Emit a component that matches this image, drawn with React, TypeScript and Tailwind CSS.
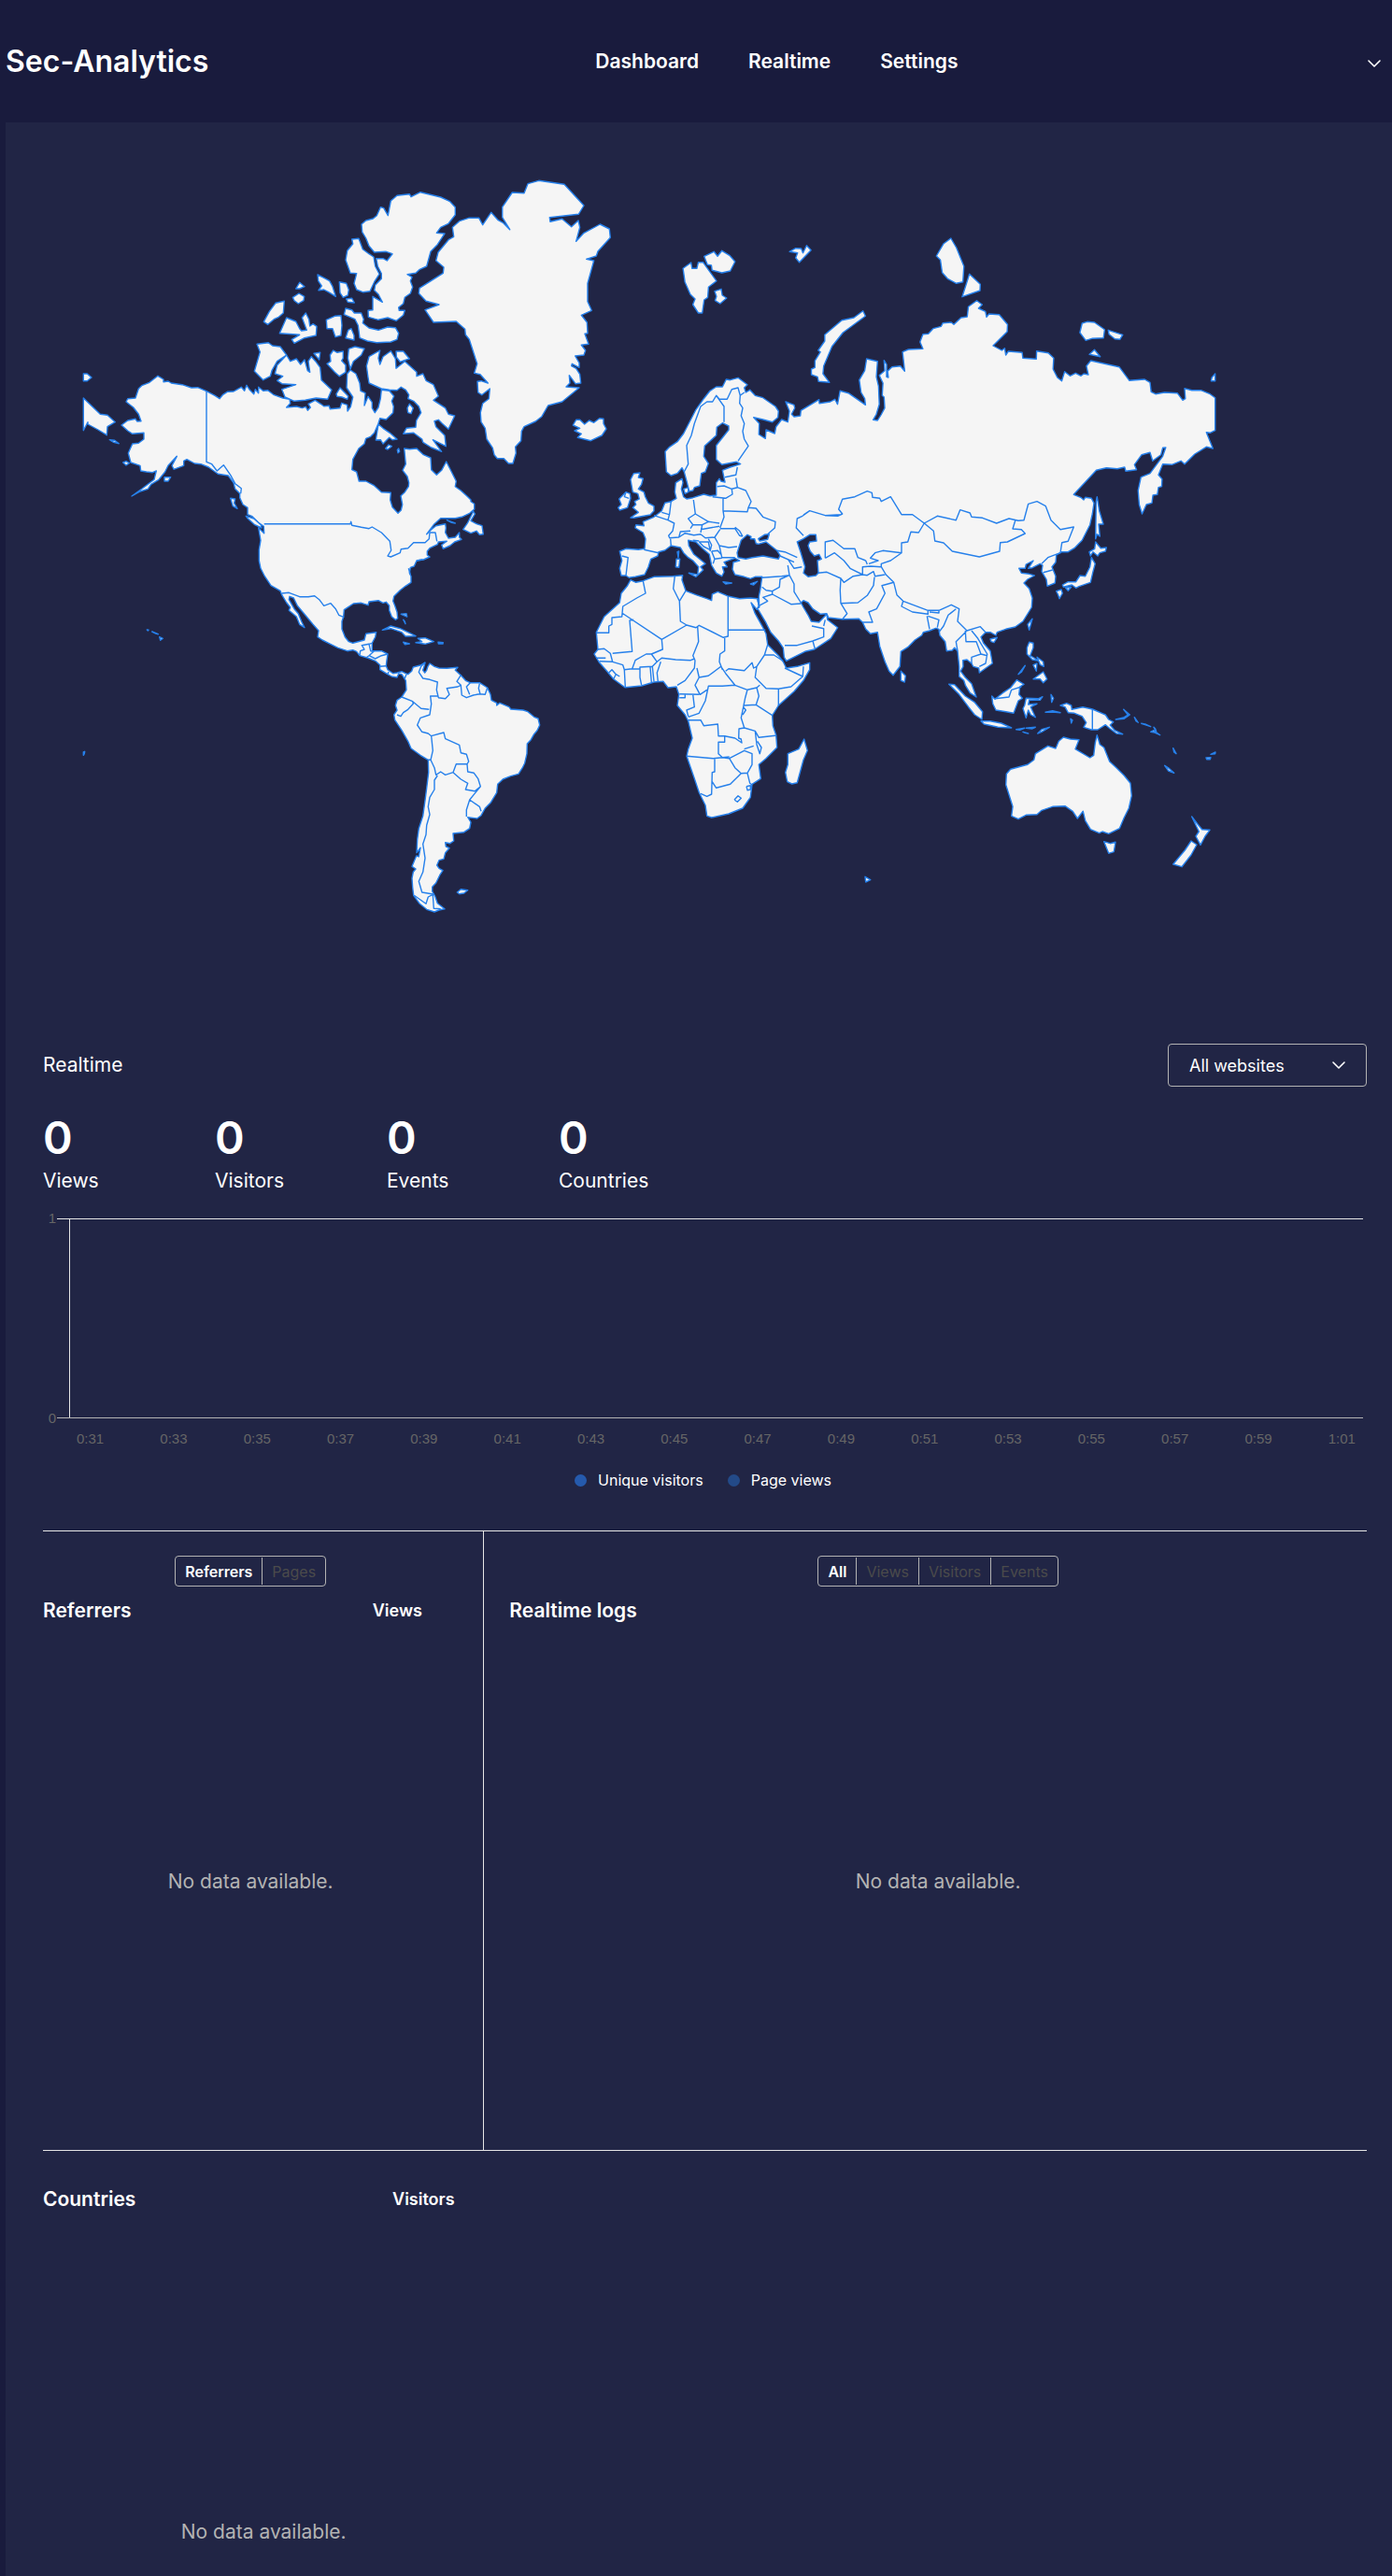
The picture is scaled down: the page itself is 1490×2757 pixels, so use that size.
import React from "react";
import { ChevronDown } from "lucide-react";

/* ---------- World map geometry ---------- */

type Sheet = "A" | "B" | "C" | "D" | "E" | "F" | "G";
type Part = [Sheet, string];

// Every survey sheet has its own origin and scale on the map.
const SHEETS: Record<Sheet, [number, number, number, number]> = {
  A: [80, 180, 1 / 3, 1 / 3],
  B: [400, 180, 1 / 3, 1 / 3],
  C: [80, 520, 1 / 3, 1 / 3],
  D: [620, 380, 1 / 3, 1 / 3],
  E: [620, 600, 1 / 3, 1 / 3],
  F: [700, 240, 610 / 1568, 1 / 3],
  G: [860, 500, 1 / 3, 1 / 3],
};

function project([sheet, list]: Part): string {
  const [ox, oy, sx, sy] = SHEETS[sheet];
  return list
    .trim()
    .split(/\s+/)
    .map((pair) => {
      const [x, y] = pair.split(",").map(Number);
      return `${(ox + x * sx).toFixed(1)} ${(oy + y * sy).toFixed(1)}`;
    })
    .join("L");
}

const shape = (...parts: Part[]) => `M${parts.map(project).join("L")}Z`;
const shapes = (sheet: Sheet, text: string) =>
  text.split(";").map((s) => shape([sheet, s])).join("");
const lines = (sheet: Sheet, text: string) =>
  text.split(";").map((s) => `M${project([sheet, s])}`).join("");

const AMERICAS = shape(
  ["A", "267,667 285,678 285,686 300,684 310,690 345,695 375,705 395,704 423,716 450,730 465,740 475,728 490,718 510,717 535,703 545,715 552,697 562,712 575,725 580,710 590,722 590,703 605,715 620,713 640,728 668,738 690,742 692,755 680,768 712,765 730,770 742,766 748,778 757,768 750,757 772,745 790,757 800,764 817,763 820,773 852,770 857,754 875,760 876,780 886,766 893,735 873,705 875,660 885,648 903,660 915,690 918,715 933,722 930,762 942,733 955,752 955,770 964,785 975,768 982,740 985,712 1010,715 1025,732 1018,748 1024,765 1022,785 1000,807 980,803 975,820 962,850 950,862 935,868 930,885 912,900 893,935 890,968 905,975 913,1005 935,1005 960,1018 985,1040 1015,1042"],
  ["C", "1013,45 1020,68 1038,88 1048,78 1052,60 1047,32 1060,20 1072,2"],
  ["A", "1073,1010 1068,990 1053,970 1063,950 1058,900 1075,902 1098,900 1120,920 1143,930 1145,968 1162,985 1178,970 1193,942 1210,975 1225,1005 1222,1022"],
  ["C", "1240,15 1262,35 1272,45 1272,50 1283,58 1283,75 1268,88 1243,100 1222,104 1175,104 1155,122 1130,155 1145,140 1160,128 1190,122 1192,135 1190,150 1200,168 1222,165 1235,150 1235,165 1242,172 1220,180 1205,192 1183,202 1178,190 1195,178 1168,180 1165,188 1140,200 1132,210 1132,222 1140,228 1120,237 1098,240 1090,258 1078,262 1075,280 1080,290 1080,310 1062,322 1045,335 1025,355 1022,370 1028,385 1035,405 1037,425 1030,430 1018,420 1010,400 1010,385 1000,373 990,376 975,368 945,372 942,383 920,376 895,378 880,388 865,398 863,420 858,435 858,460 868,485 880,500 893,505 930,495 935,475 968,470 965,485 955,505 955,530 985,530 1005,540 1002,560 1000,578 1005,590 1022,602 1035,600 1050,596 1062,602 1070,605 1082,595 1087,582 1110,576 1125,567 1122,580 1118,592 1124,600 1130,592 1134,580 1140,570 1155,580 1170,585 1195,586 1230,583 1222,592 1240,608 1255,625 1270,632 1300,632 1325,648 1335,670 1338,688 1355,697 1355,705 1365,697 1395,710 1400,717 1440,720 1455,725 1475,742 1488,747 1493,768 1485,785 1475,797 1465,815 1453,828 1452,860 1445,890 1438,905 1425,925 1400,932 1375,942 1358,958 1355,985 1335,1018 1318,1035 1305,1058 1292,1068 1262,1064 1272,1080 1268,1100 1250,1112 1215,1116 1217,1140 1205,1148 1190,1145 1192,1158 1203,1163 1190,1178 1185,1198 1170,1202 1163,1218 1170,1228 1182,1235 1172,1250 1160,1275 1148,1288 1148,1302 1157,1318 1165,1340 1188,1358 1170,1362 1155,1368 1130,1360 1108,1342 1088,1315 1085,1290 1083,1260 1087,1240 1095,1230 1083,1222 1090,1205 1097,1188 1105,1190 1110,1162 1098,1178 1100,1135 1105,1100 1118,1060 1125,1010 1130,970 1136,920 1135,880 1110,865 1080,843 1070,820 1050,785 1028,752 1025,735 1035,720 1030,705 1035,688 1050,678 1065,655 1063,625 1050,605 1040,603 1035,615 1018,612 1005,605 980,590 980,575 965,562 940,552 915,545 905,532 893,527 875,530 845,520 815,505 795,495 780,485 783,465 765,445 740,415 715,385 703,360 690,355 688,365 705,395 718,410 728,435 738,455 722,445 712,420 688,400 692,390 680,375 665,350 660,337 630,320 610,290 597,265 592,240 592,205 597,175 590,135 608,152 607,130 590,118 570,98 555,92 555,70 540,60 530,38"],
  ["A", "530,1045 515,1030 510,1010 493,987 460,982 430,960 405,950 385,948 360,935 350,940 350,955 318,967 312,955 328,925 300,955 290,975 270,1000 245,1015 235,1030 210,1038 183,1053 215,1030 235,1015 255,1000 262,972 250,977 230,975 212,972 210,955 180,945 172,915 185,885 205,883 222,870 222,850 185,853 170,843 150,825 170,810 195,805 200,813 213,812 205,790 188,768 165,750 170,740 195,738 205,708 215,698 240,688"]
);

const ARCTIC = shapes(
  "A",
  `1015,105 1035,88 1075,83 1080,92 1110,77 1175,93 1205,107 1222,125 1222,150 1200,178 1175,190 1162,208 1188,210 1165,245 1143,268 1130,315 1108,325 1095,337 1068,341 1083,350 1078,362 1085,382 1078,402 1060,415 1055,435 1040,447 1042,457 1060,457 1055,472 1033,490 1005,480 975,487 943,478 942,457 957,455 957,412 988,430 975,405 962,392 965,375 985,355 985,338 973,315 968,290 990,290 1003,297 1020,275 1000,268 962,270 945,250 935,225 923,205 921,180 935,168 958,162 970,152 982,125 992,128 1006,152;
890,228 912,226 925,260 945,275 960,285 965,315 978,340 962,365 948,395 925,398 905,390 897,370 905,338 885,337 870,295 875,265 893,243;
780,342 800,352 818,362 828,380 838,412 815,398 800,390 783,392 793,378 782,362;
850,365 872,370 880,390 877,408 862,415 852,400;
872,420 890,418 898,432 877,430;
710,387 722,367 738,380 722,387;
700,415 720,402 737,412 735,425 718,435 705,425;
607,493 625,460 645,433 673,427 670,465 655,478 640,485 620,502;
658,530 680,480 710,492 722,515 728,522 745,520 730,480 742,465 752,485 755,507 765,500 777,508 775,537 738,545 705,562 697,550 722,535;
808,487 835,475 855,473 858,505 855,537 837,542 828,515 810,515;
865,470 870,450 890,455 898,465 920,465 928,485 925,497 945,513 975,520 1005,510 1030,512 1040,530 1035,550 1015,558 970,560 940,555 915,545 910,505 900,485;
870,545 878,520 888,515 897,537 897,552;
585,565 622,560 635,570 660,573 680,600 650,620 633,650 628,668 605,680 577,652 595,590;
680,600 692,620 712,612 725,630 738,615 748,650 755,655 750,620 760,605 775,622 788,640 792,680 825,712 812,742 775,738 740,745 705,748 675,735 665,710 710,695 665,692 650,682 668,668 643,660 650,632;
768,595 788,592 785,615;
810,628 822,620 820,600 830,585 843,592 862,588 862,610 857,618 870,632 870,655 850,668 835,655;
885,645 877,610 880,580 900,573 930,580 920,600 895,620;
840,725 852,705 878,732 875,742 858,735 842,733;
985,708 945,690 942,672 937,635 945,605 980,585 975,610 980,630 990,605 1015,587 1030,612 1032,643 1060,620 1098,655 1098,668 1118,660 1128,682 1152,695 1168,732 1152,745 1190,770 1200,790 1220,795 1200,838 1180,820 1168,808 1155,812 1160,830 1188,858 1192,893 1150,872 1178,910 1145,897 1118,880 1115,870 1088,850 1055,853 1065,835 1095,832 1097,810 1112,785 1105,765 1088,748 1070,740 1073,728 1063,712 1048,703 1035,713 1010,712;
1032,588 1055,588 1075,612 1058,617 1045,622 1033,607;
1068,770 1075,757 1087,770 1080,788 1070,785;
975,822 990,835 1012,850 1035,870 1020,872 1010,865 990,885 982,872 967,873;
998,900 1008,888 1018,893 1005,903;
1036,905 1040,900 1043,910 1038,914;
288,992 308,992 300,1005 288,1005;
155,945 165,941 175,947 165,954;
28,738 82,790 105,793 130,815 105,830 103,857 75,840 42,822 42,815 28,842;
28,660 40,660 54,672 40,683 28,683;
112,872 128,874 142,884 125,880`
);

const NORTH_ATLANTIC = shapes(
  "B",
  `495,50 530,40 612,52 675,120 658,148 565,158 567,172 605,163 635,188 657,168 662,190 650,235 675,208 727,180 757,195 760,223 720,267 715,282 683,292 707,297 687,370 687,428 700,457 667,472 685,495 687,530 678,532 690,565 667,568 680,585 675,600 647,603 660,625 660,640 637,628 635,635 650,643 662,662 665,690 648,692 628,665 630,690 618,702 660,705 605,750 560,762 540,797 520,813 483,830 475,845 473,875 455,895 457,915 447,948 433,948 418,932 397,932 387,920 382,898 363,870 358,835 345,815 343,785 350,755 370,740 373,708 347,728 335,720 333,685 345,683 367,690 342,662 323,658 332,628 307,550 295,535 293,517 265,492 192,495 165,455 210,438 168,427 145,402 147,385 223,337 225,318 200,297 207,270 240,230 257,220 253,190 275,170 305,160 338,160 350,182 377,142 400,167 415,175 437,197 413,158 413,125 445,78 483,80;
640,825 650,808 662,808 677,822 692,810 707,817 725,803 738,805 738,820 747,837 733,858 697,875 655,865 667,853 645,843 662,835`
);

const AMERICAN_ISLANDS = shapes(
  "C",
  `1280,82 1285,90 1272,112 1290,122 1308,128 1312,155 1300,157 1290,145 1272,152 1247,140 1262,118;
550,97 575,105 598,125 600,135 578,125 556,105;
500,40 515,42 512,55 522,73 508,65;
988,463 1015,450 1045,458 1070,470 1095,482 1062,483 1050,470 1015,458;
1102,490 1125,488 1153,500 1125,508 1095,503 1115,500;
1055,502 1075,507 1060,509;
1167,502 1183,503 1182,507 1168,507;
1048,412 1065,410 1067,420;
1055,430 1062,443 1060,436;
1195,110 1222,120 1210,118;
232,462 237,463 235,465;
248,468 268,476 260,474;
272,485 283,490 275,496;
1228,1305 1240,1295 1262,1298 1250,1308 1235,1310;
28,855 32,853 31,860 28,865`
);

const EURASIA = shape(
  ["D", "295,387 280,375 276,310 290,295 315,278 335,252 375,175 400,140 420,115 440,102 460,102 472,78 485,80 510,73 540,95 530,105 535,120 548,112 565,130 590,137 630,165 640,180 638,200 620,215 590,207 560,200 578,220 577,255 598,268 600,240 628,252 632,230 650,207 670,215 675,180 663,150 690,160 692,170 682,190 690,198 710,195 712,178 770,143"],
  ["F", "455,575 485,570 498,562 505,578 512,535 535,542 582,580 580,560 570,540 565,500 580,470 585,432 615,440 612,490 618,520 620,578 612,610 603,628 615,630 625,612 635,590 633,555 628,550 630,510 620,485 635,470 633,437 640,450 640,490 645,492 643,472 655,458 678,455 690,472 684,410 700,402 740,400 732,378 740,353 755,352 768,335 790,328 795,317 818,315 825,322 845,300 862,297 865,265 888,245 903,258 893,270 912,280 915,298 922,288 950,290 973,322 972,345 933,390 957,405 965,398 968,420 975,408 1013,412 1015,430 1052,433 1053,407 1085,413 1100,430 1098,465 1110,492 1122,503 1130,473 1145,487 1160,478 1175,487 1183,480 1195,483 1190,455 1202,438 1280,458 1308,502 1350,498 1365,508 1368,538 1380,545 1405,540 1440,542 1455,565 1462,560 1460,527 1480,533 1505,533 1530,545 1544,557 1544,662 1530,670 1520,668 1538,720 1520,715 1488,738 1460,770 1450,760 1425,772 1400,770 1388,805 1398,818 1397,842 1388,845 1385,868 1373,870 1370,895 1355,900 1343,930 1335,900 1332,855 1340,812 1365,800 1400,745 1408,717 1400,718 1395,740 1372,760 1365,733 1342,740 1322,772 1328,788 1298,793 1295,780 1275,785 1245,782 1217,790"],
  ["G", "868,88 890,97 900,105 905,97 925,100 933,115 928,150 920,185 895,235 870,260 850,272 830,272 812,282 810,305 798,320 810,350 808,372 783,382 780,360 765,335 768,315 760,310 735,323 722,325 738,300 715,312 712,325 692,325 700,340 725,343 742,348 720,360 708,372 725,390 735,420 733,450 705,495 680,513 650,520 622,530 618,540 600,530 585,530 570,545 578,565 600,590 607,630 565,660 563,645 545,640 540,630 525,618 512,620 513,640 505,655 520,675 540,695 555,738 535,725 520,700 515,685 500,672 500,640 495,590 485,580 478,588 460,590 455,560 438,540 435,520 425,517 405,525 385,530 380,540 358,555 335,578 313,592 310,640 288,668 275,655 262,625 245,575 238,530 215,535 200,520 190,498 178,487 125,488 80,483 75,470 55,472 30,455 15,435 0,428"],
  ["E", "712,135 720,150 735,175 745,195 770,198 795,172 797,190 830,215 822,228 808,250 755,285 725,292 665,322 658,310 655,280 640,258 615,230 600,200 575,158 570,155 578,150 577,115 582,90"],
  ["D", "587,712 565,712 550,718 530,712 500,705 492,688 495,665 515,660 500,652 465,665 475,680 460,680 465,697 458,710 440,700 425,675 420,650 418,640 395,620 375,600 350,595 352,612 368,640 405,670 390,680 398,690 375,712 352,700 380,705 383,680 365,660 350,650 335,635 325,618 295,612 275,627 255,632 252,645 230,655 222,680 210,705 180,712 160,715 150,708 135,708 130,685 137,660 130,630 150,622 190,625 210,622 213,590 205,570 180,555 182,545 208,548 205,535 240,520 265,500 275,475 295,470 312,460 307,440 310,410 330,397 333,410 328,430 335,455 345,462 365,458 400,447 420,452 440,450 440,410 450,397 455,405 468,408 460,370 485,360 518,350 505,343 458,352 440,335 440,290 480,240 480,228 460,218 442,232 440,258 403,292 400,325 415,348 405,375 392,380 387,420 370,425 365,435 353,437 345,405 337,375 330,362 315,380"]
);

const AFRICA = shapes(
  "E",
  `165,62 182,70 205,65 240,52 300,50 332,47 330,62 342,97 375,110 410,122 425,128 427,108 445,100 480,115 515,122 550,120 572,122 577,145 570,157 552,135 565,170 590,215 600,235 605,270 640,305 655,325 665,345 700,340 740,328 740,350 720,385 690,420 640,465 620,497 622,530 632,560 635,600 600,635 577,655 583,700 555,718 550,760 525,795 480,813 425,825 410,820 405,785 385,745 370,700 345,628 350,605 363,570 350,515 340,495 315,465 320,430 312,405 285,408 270,388 240,390 200,402 147,407 110,380 85,350 65,328 48,300 60,285 55,230 80,180 130,135 135,105 155,80;
722,573 733,610 720,640 700,713 683,717 668,710 662,680 670,655 670,620 705,605`
);

const EUROPEAN_ISLANDS = shapes(
  "D",
  `175,380 195,378 190,393 205,397 200,415 190,430 208,440 212,455 222,475 240,485 240,500 228,513 175,523 165,522 190,505 172,490 182,480 178,470 193,462 188,445 172,440 165,400;
150,440 163,445 165,460 155,490 130,498 125,490 135,480 128,462;
335,430 350,425 350,440 340,445;
312,655 323,655 320,682 310,680;
315,632 320,630 318,650;
462,728 490,732 470,735;
550,735 572,727 560,738`
);

const NORTHERN_ISLANDS = shapes(
  "F",
  `80,142 102,123 105,142 118,142 122,122 135,122 172,182 150,202 148,235 138,243 133,285 122,285 107,258 113,240 100,225 85,185;
138,103 165,88 175,103 187,85 208,100 223,120 210,150 187,156 160,148 158,132 147,130;
167,215 185,208 188,228 200,237 182,255 168,245 172,232;
373,88 390,77 405,78 410,92 420,68 432,83 400,122 390,108 395,92;
575,278 582,295 520,348 490,392 467,455 465,480 483,508 453,505 450,490 433,483 433,465 443,460 443,438 458,410 452,405 470,375 470,355 517,308 550,300;
817,45 832,75 853,135 850,185 832,190 808,175 793,155 788,115 777,102 797,62;
868,160 898,193 897,213 848,233;
1178,318 1192,313 1212,315 1240,338 1237,365 1205,367 1188,373 1172,348;
1250,340 1290,355 1282,370 1268,368 1252,353;
1198,418 1212,403 1228,425;
1544,480 1544,503 1533,503 1535,492`
);

const PACIFIC = shapes(
  "G",
  `313,655 328,670 325,690 313,685;
600,552 622,547 612,563 603,560;
735,487 725,523 720,505;
943,95 950,140 963,183 948,183 952,222 943,215 938,230 940,110;
938,240 955,260 973,258 970,270 952,275 945,285 930,272 922,285 918,272 935,262;
925,290 937,310 930,335 922,370 885,383 875,388 862,378 835,385 832,378 850,368 875,368 888,348 905,350 920,320;
812,398 828,393 832,405 822,422 818,410;
842,388 860,385 850,397;
467,697 485,698 520,735 550,755 575,785 573,810 550,795 530,770 500,730;
570,815 600,815 635,822 668,837 625,835 580,825;
683,842 710,838 695,844;
705,850 722,855 712,853;
715,838 745,835 735,840;
752,855 765,842 790,835 765,850;
605,735 615,745 640,725 665,708 685,683 708,697 695,705 692,730 703,742 690,750 675,790 650,785 618,780 608,760;
710,765 715,742 755,743 768,737 760,748 725,748 722,762 750,760 730,770 745,803 730,795 722,780 715,805 705,775;
795,730 803,742 797,755;
777,787 800,782 825,788 800,786;
858,808 864,812 860,822;
725,562 738,565 738,580 728,605 740,612 755,622 735,618 718,600 718,580;
750,610 770,625 772,640 760,634;
738,635 750,630 748,655;
738,680 770,657 782,680 770,692 760,680;
712,637 690,665 700,658;
825,765 845,758 860,765 862,778 897,770 928,777 970,795 980,810 995,818 985,828 1000,845 1025,857 1005,855 985,840 970,827 945,843 925,843 900,835 908,820 895,800 870,790 850,788 840,770;
1003,810 1030,808 1048,795 1028,778 1042,795 1028,804;
1063,803 1075,820 1068,815;
1085,823 1115,833 1100,826;
1115,850 1125,845 1145,860 1128,852;
1125,835 1133,850 1130,840;
1187,902 1197,920 1190,915;
1160,958 1175,968 1190,982 1172,975;
1293,933 1308,932 1306,938 1295,938;
1308,922 1323,915 1322,920;
835,867 857,873 885,875 873,905 920,933 932,925 937,885 943,860 952,890 965,900 983,945 1005,965 1030,990 1050,1015 1054,1055 1045,1095 1030,1125 1015,1160 980,1177 960,1170 950,1175 922,1163 905,1135 898,1105 880,1128 865,1105 840,1088 800,1090 765,1102 750,1115 715,1117 690,1130 668,1120 672,1090 650,1020 652,985 665,970 720,955 740,940 745,920 785,895 810,903 820,880;
965,1202 985,1208 1002,1204 997,1235 980,1240;
1247,1122 1265,1145 1280,1163 1305,1165 1290,1185 1275,1213 1260,1185 1270,1170;
1245,1200 1263,1212 1245,1245 1215,1283 1187,1275 1225,1230;
198,1315 215,1325 200,1332`
);

const INLAND_SEAS = shapes(
  "D",
  `510,650 507,635 515,610 520,595 540,577 552,583 550,590 563,590 568,605 575,607 600,600 635,628 645,643 640,655 590,645 555,650 535,655;
575,590 595,577 610,575 605,592 580,597;
720,590 740,577 760,577 762,597 740,600 735,612 742,630 755,645 770,640 778,655 765,660 768,700 760,708 735,712 720,700 725,680 710,630 700,600`
);

const BORDERS =
  lines("A", "423,716 423,943 440,950 457,972 478,953 500,985 515,1013 535,1028 533,1045") +
  lines(
    "C",
    `608,122 885,122 887,115 890,127 920,133 945,137 955,132 985,150 1012,178 1016,207 1005,225 1015,228 1045,215 1048,203 1070,200 1088,182 1125,182 1138,170 1140,150 1158,150 1163,178;
665,345 688,343 722,356 750,356 770,353 785,365 800,385 822,377 838,395 848,415 865,422;
915,545 917,530 930,525 922,512 945,508 950,530 960,532 945,545 938,550;945,508 955,505;
945,545 965,555 985,545 1005,540;980,580 1000,578;1005,605 1008,597;1060,618 1065,605;
1125,567 1112,580 1105,598 1118,618 1140,622 1165,630 1162,655 1168,680 1190,683 1203,670 1195,650 1230,645 1240,640;
1240,608 1227,628 1240,640 1243,672 1258,680 1280,672 1300,668 1318,670 1325,648;
1270,632 1258,645 1268,670;1300,635 1297,650 1302,668;
1168,675 1142,675 1145,700 1140,735 1110,745 1100,768 1115,790 1135,795 1145,803 1150,850 1143,880 1135,880;
1035,735 1047,740 1055,728 1070,718 1087,700 1085,692 1050,678;1085,692 1112,715 1138,718;
1145,803 1185,792 1190,812 1235,832 1240,857 1258,862 1265,885 1260,893 1225,893 1215,920;
1143,880 1155,905 1160,928 1175,918 1190,928 1215,920;
1165,930 1155,945 1155,975 1140,1000 1135,1030 1140,1055 1130,1090 1128,1120 1118,1150 1125,1195 1118,1240 1105,1270 1115,1305 1155,1312;
1090,1315 1128,1342 1135,1320 1150,1312 1153,1357 1175,1358;
1215,920 1240,942 1262,955 1255,975 1285,980 1303,965 1295,940 1282,922 1262,918 1260,893;
1303,965 1268,1008 1258,1040 1258,1062;1268,1008 1300,1030 1305,1045;
1072,265 1078,285;1098,240 1118,236`
  ) +
  lines(
    "E",
    `205,65 213,105 185,120 140,147 137,180 105,183 105,205 95,210 95,232 55,232;
137,168 265,253 268,285 232,300;175,190 162,192 170,292 107,298;
265,253 345,207 325,195 322,130 302,90 307,50;322,130 342,97;
345,207 375,215 385,208 463,247 478,243 478,115;478,222 598,223;
380,212 383,260 365,305 372,320;232,300 250,325 265,313 310,318 358,320 370,315;
467,247 467,290 452,300 450,325 460,350;
145,350 170,347 180,320 215,300 232,300;250,325 235,340 195,342 195,375 200,400;170,347 195,348;
235,340 240,388;228,342 232,390;262,325 250,360 253,388;
372,320 370,345 340,385 315,400;378,345 385,375 372,400 388,430 410,415;
385,375 415,370 455,340 470,362 500,400 460,403 415,403 405,450 385,490 350,502;
322,428 385,430;340,430 340,440 322,440;365,430 370,470 345,480 350,500;
350,512 390,512 400,530 445,525 447,563 467,563 467,583 447,583 447,620 460,632 482,635;
467,563 500,570 522,585 520,573 512,570 513,540 530,537 520,505 527,470 533,440 540,415 500,400;
540,415 570,408 577,435 568,463 530,465;568,463 620,497;527,470 535,480 525,495;
530,537 565,547 577,568 630,562;565,547 570,590 580,620 585,600 572,580;530,605 560,595;
482,635 530,610 555,620 555,655 540,682 520,683 500,665 482,635;
345,628 430,635 482,630;435,637 435,678 427,680 425,750 410,757 390,748;
427,710 440,730 485,718 520,683;540,682 548,715 555,720;
498,768 510,755 520,763 508,775 498,768;537,725 550,722 550,735 540,737 537,725;
470,355 480,347 530,353 555,328 560,345 570,340;
605,270 595,303 570,340 565,375 600,410 640,412 680,405 718,372 660,345;
595,303 625,303 655,322;640,465 640,412;570,408 580,400;720,340 718,370;
60,285 80,283 100,298 107,325 65,323;55,313 85,313;107,325 140,335 145,350 148,405;
95,360 105,350 118,365 110,380;118,365 130,372;
577,145 605,130 590,118 620,108 620,98 643,85 645,60 675,47;620,108 680,140 712,138;
675,47 690,75 690,100 712,135;587,85 600,95 620,98;
660,272 700,272 750,258 785,245 785,218 747,210;750,258 757,283;790,190 785,210;
587,55 650,50 675,47 670,15;572,122 578,150`
  ) +
  lines(
    "D",
    `337,375 350,350 345,290 360,258 370,220 390,165 410,150 428,150 440,130 465,165 465,215;
440,130 450,142 475,142 490,110 510,105 517,130 530,120;
517,130 515,155 525,170 520,195 530,220 525,245 530,270 543,292 510,340;
508,360 503,385 468,392;503,395 508,425 535,435 552,470 543,490 568,492 590,520 630,535 628,555 605,575;
508,425 490,430 465,420 443,422;490,430 492,447 470,460 428,455;
462,460 462,500 540,503 543,490;462,500 465,520 452,555;
367,465 373,510 415,535;373,510 350,525 365,545 357,557;365,545 395,545 415,535 450,540;
295,470 290,510 285,530 305,540 300,565 287,580 290,587 320,585 325,567 357,565;
240,515 285,530;265,505 288,512;295,612 293,590;320,585 340,572 368,578 390,575;
395,545 390,570;390,560 450,550;390,575 405,587 435,585 452,560;
452,557 500,557 515,580 525,582;500,553 515,565 525,582;
435,585 450,612 480,618 507,615;450,612 458,650 500,650;
385,600 415,600 420,625 400,615 385,600;365,595 385,597;415,590 425,610 420,630;
425,630 435,655 430,670;435,655 458,652;425,630 445,628 455,640;208,625 255,635;137,645 157,650 150,708;
635,628 660,632 700,650;645,645 690,665;670,655 690,685 715,680;
150,440 145,455 160,460;
720,580 697,555 700,525 715,518 740,500 790,515 840,512`
  ) +
  lines(
    "G",
    `0,153 20,140 70,155 110,157 125,150 113,135 125,103 165,95 205,77 220,82 222,97 245,100 250,110 280,95 315,152 350,152 388,180;
388,180 430,157 490,170 503,137 535,147 540,160 575,163 620,180 660,165 690,172 708,170 722,118 750,110 778,125 795,170 825,200 868,192 850,238 830,242 825,275 785,290 765,310;
388,180 418,205 422,237 450,243 478,270 565,288 630,270 632,242 655,240 712,213 700,200 672,198 680,172;
388,180 370,210 345,208 335,240 315,243 315,275 255,268 230,275 215,292 240,300 210,310;
315,275 280,300 250,310 250,320 265,345 290,370 300,410 320,430 400,460 435,460 475,442 500,455 495,495 525,525 568,512 585,530;
70,292 70,240 95,235 130,262 165,262 175,290 200,300;
70,292 100,275 130,300 150,325 190,345;
47,340 75,337 120,357 130,370 160,350 190,345 205,347 225,335 230,350 262,345;
120,357 118,395 120,437 175,435 205,412 225,380 228,353;120,437 140,470 125,488;
290,370 252,380 262,405 235,455 210,465 222,498 190,498;
320,430 315,447 350,465 400,472 400,460;397,478 405,520;400,478 435,490 430,515;405,465 435,468 435,460;
490,455 465,475 450,510 435,530;525,525 490,560 495,590;
520,525 522,560 555,560 570,600 540,610 540,630;540,525 560,550 590,600 585,630 565,640;570,600 590,605;
190,345 190,320 215,318 250,320;200,300 205,312;770,338 800,330;
615,743 660,738 668,715 700,705;928,777 928,843`
  );

const LAND =
  AMERICAS + ARCTIC + NORTH_ATLANTIC + AMERICAN_ISLANDS + EURASIA + AFRICA +
  EUROPEAN_ISLANDS + NORTHERN_ISLANDS + PACIFIC;

function WorldMap() {
  return (
    <svg viewBox="6 131 1484 986" className="block w-full" role="img" aria-label="World map">
      <g stroke="#2680eb" strokeWidth="1.4" strokeLinejoin="round">
        <path d={LAND} fill="#f5f5f5" />
        <path d={INLAND_SEAS} fill="#212545" />
        <path d={BORDERS} fill="none" />
      </g>
    </svg>
  );
}

/* ---------- Page parts ---------- */

const METRICS = ["Views", "Visitors", "Events", "Countries"];
const TIMES = [
  "0:31", "0:33", "0:35", "0:37", "0:39", "0:41", "0:43", "0:45",
  "0:47", "0:49", "0:51", "0:53", "0:55", "0:57", "0:59", "1:01",
];

function Header() {
  return (
    <header className="grid h-[131px] grid-cols-[3fr_3fr_1fr] items-center pr-[11px]">
      <a href="#" className="text-[32px] font-semibold leading-10">Sec-Analytics</a>
      <nav className="flex gap-[53px] text-[21px] font-semibold leading-7">
        <a href="#">Dashboard</a>
        <a href="#">Realtime</a>
        <a href="#">Settings</a>
      </nav>
      <button type="button" aria-label="Account menu" className="mt-1 justify-self-end">
        <ChevronDown size={24} strokeWidth={1.6} className="-mr-1" />
      </button>
    </header>
  );
}

function ButtonGroup({ items }: { items: string[] }) {
  return (
    <div className="mx-auto flex h-[33px] w-fit items-center rounded border border-[#b3b3b3] text-[16px] leading-6">
      {items.map((item, i) => (
        <button
          key={item}
          type="button"
          className={
            i === 0
              ? "h-[29px] px-[10px] font-semibold text-white"
              : "h-[29px] border-l border-[#b3b3b3] px-[10px] text-[#4b4b4b]"
          }
        >
          {item}
        </button>
      ))}
    </div>
  );
}

function TableHead({ title, value }: { title: string; value?: string }) {
  return (
    <div className="flex h-7 items-center justify-between font-semibold">
      <h2 className="text-[21px] leading-7">{title}</h2>
      {value && <span className="w-[130px] text-center text-[18px] leading-7">{value}</span>}
    </div>
  );
}

function Chart() {
  return (
    <section aria-label="Realtime chart" className="mt-[26px] pr-[4px]">
      <div className="flex font-['Liberation_Sans',sans-serif] text-[15px] leading-4 text-[#666666]">
        <div className="flex w-[15px] flex-col justify-between pr-[1px] text-right">
          <span className="-mt-2">1</span>
          <span className="-mb-2">0</span>
        </div>
        <div className="h-[214px] flex-1 border-y border-t-[#e6e6e6] border-b-[#b3b3b3] pl-[13px]">
          <div className="h-full border-l border-[#e6e6e6]" />
        </div>
      </div>
      <div className="mt-3 flex justify-between pl-9 pr-2 font-['Liberation_Sans',sans-serif] text-[15px] leading-5 text-[#666666]">
        {TIMES.map((t) => (
          <span key={t}>{t}</span>
        ))}
      </div>
      <div className="mt-[22px] flex justify-center gap-[26px] text-[16px] leading-6">
        <span className="flex items-center gap-3">
          <i className="size-[13px] rounded-full bg-[#255aad]" />
          Unique visitors
        </span>
        <span className="flex items-center gap-3">
          <i className="size-[13px] rounded-full bg-[#234a88]" />
          Page views
        </span>
      </div>
    </section>
  );
}

export default function App() {
  return (
    <div className="flex min-h-screen flex-col bg-[#191b3d] pl-[6px] font-['Inter',sans-serif] text-white">
      <Header />
      <main className="flex-1 bg-[#212545]">
        <WorldMap />
        <div className="pl-10 pr-[27px]">
          <div className="flex items-center justify-between">
            <h1 className="text-[21px] leading-7">Realtime</h1>
            <div className="relative">
              <select
                aria-label="Website"
                className="h-[46px] w-[213px] appearance-none rounded border border-[#b3b3b3] bg-transparent pl-[22px] text-[18px]"
              >
                <option>All websites</option>
              </select>
              <ChevronDown
                size={24}
                strokeWidth={1.6}
                className="pointer-events-none absolute right-[18px] top-[11px]"
              />
            </div>
          </div>

          <dl className="mt-[31px] flex">
            {METRICS.map((name) => (
              <div key={name} className="flex w-[184px] flex-col-reverse gap-2">
                <dt className="text-[21px] leading-7">{name}</dt>
                <dd className="text-[48px] font-semibold leading-[48px]">0</dd>
              </div>
            ))}
          </dl>

          <Chart />

          <div className="mt-[42px] grid grid-cols-3 border-y border-[#e6e6e6]">
            <section className="border-r border-[#e6e6e6] pb-3 pr-[27px] pt-[26px]">
              <ButtonGroup items={["Referrers", "Pages"]} />
              <div className="mt-3">
                <TableHead title="Referrers" value="Views" />
              </div>
              <p className="flex h-[551px] items-center justify-center text-[21px] text-[#b3b3b3]">
                No data available.
              </p>
            </section>
            <section className="col-span-2 pl-[27px] pt-[26px]">
              <ButtonGroup items={["All", "Views", "Visitors", "Events"]} />
              <div className="mt-3">
                <TableHead title="Realtime logs" />
              </div>
              <p className="flex h-[551px] items-center justify-center text-[21px] text-[#b3b3b3]">
                No data available.
              </p>
            </section>
          </div>

          <section className="w-1/3 pb-8 pt-[38px]">
            <TableHead title="Countries" value="Visitors" />
            <p className="pt-[328px] text-center text-[21px] leading-7 text-[#b3b3b3]">
              No data available.
            </p>
          </section>
        </div>
      </main>
    </div>
  );
}
